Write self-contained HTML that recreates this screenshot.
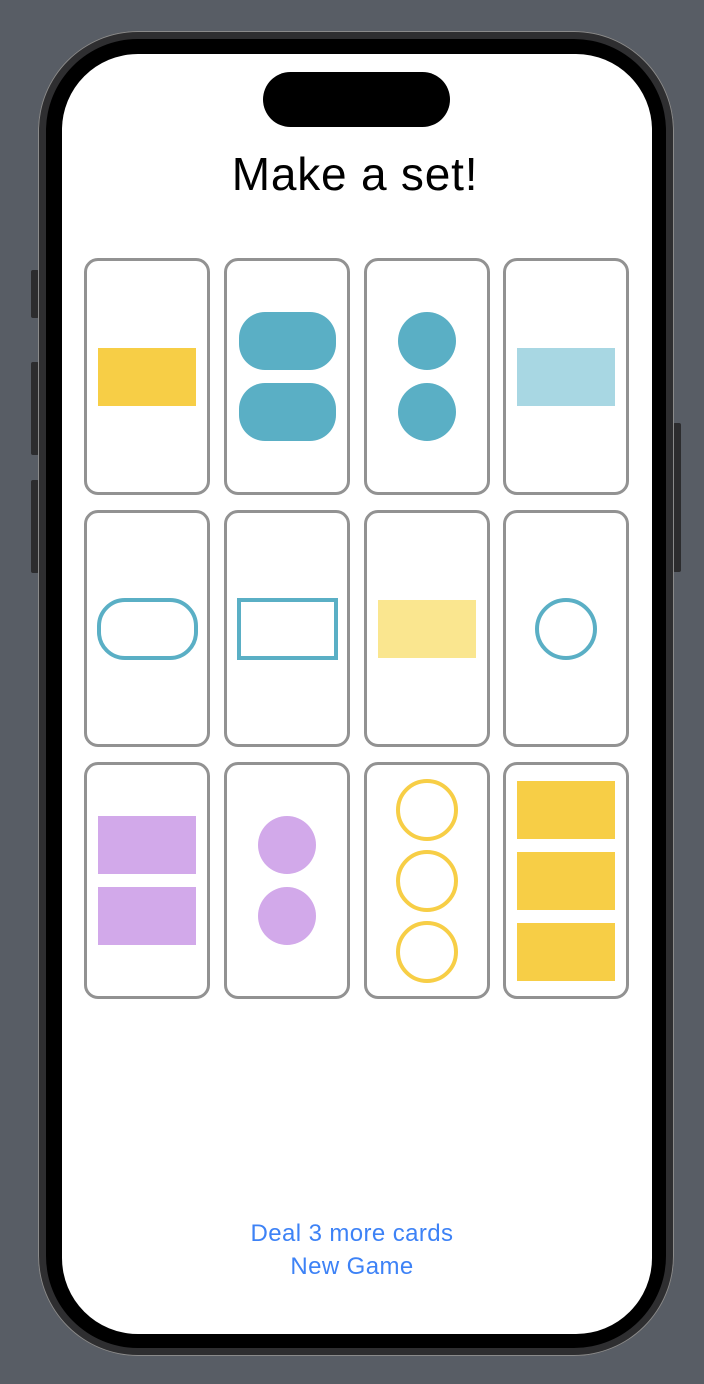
<!DOCTYPE html><html><head><style>
body{margin:0;width:704px;height:1384px;background:#585d65;position:relative;overflow:hidden;font-family:"Liberation Sans",sans-serif}
.a{position:absolute}
.card{position:absolute;width:120px;height:231px;border:3px solid #929292;border-radius:14px;box-sizing:content-box;display:flex;flex-direction:column;align-items:center;justify-content:center;gap:13px;background:#fff}
.r{width:98px;height:58px}
.o{width:97px;height:58px;border-radius:26px;box-sizing:border-box}
.c{width:58px;height:58px;border-radius:50%;box-sizing:border-box}
.btn{position:absolute;left:0;width:704px;text-align:center;color:#3d82f6;font-size:24px;letter-spacing:0.4px}
</style></head><body>
<div class="a" style="left:31px;top:270px;width:8px;height:48px;background:#2c2c2e;border-radius:2px"></div>
<div class="a" style="left:31px;top:362px;width:8px;height:93px;background:#2c2c2e;border-radius:2px"></div>
<div class="a" style="left:31px;top:480px;width:8px;height:93px;background:#2c2c2e;border-radius:2px"></div>
<div class="a" style="left:673px;top:423px;width:8px;height:149px;background:#2c2c2e;border-radius:2px"></div>
<div class="a" style="left:38px;top:31px;width:636px;height:1325px;border-radius:100px;background:#2e2e30;box-shadow:0 0 0 1px #8a8a8a inset"></div>
<div class="a" style="left:46px;top:39px;width:620px;height:1309px;border-radius:92px;background:#000"></div>
<div class="a" style="left:62px;top:54px;width:590px;height:1280px;border-radius:76px;background:#fff"></div>
<div class="a" style="left:263px;top:72px;width:187px;height:55px;border-radius:28px;background:#000"></div>
<div class="a" style="left:0;top:147px;width:710px;text-align:center;font-size:46px;color:#000;letter-spacing:0.8px">Make a set!</div>

<div class="card" style="left:84px;top:258px"><div class="r" style="background:#f7ce46"></div></div>
<div class="card" style="left:224px;top:258px"><div class="o" style="background:#5aafc5"></div><div class="o" style="background:#5aafc5"></div></div>
<div class="card" style="left:364px;top:258px"><div class="c" style="background:#5aafc5"></div><div class="c" style="background:#5aafc5"></div></div>
<div class="card" style="left:503px;top:258px"><div class="r" style="background:#a8d7e3"></div></div>

<div class="card" style="left:84px;top:510px"><div class="o" style="border:4px solid #5aafc5;width:101px;height:62px;border-radius:28px"></div></div>
<div class="card" style="left:224px;top:510px"><div class="r" style="border:4px solid #5aafc5;box-sizing:border-box;width:101px;height:62px"></div></div>
<div class="card" style="left:364px;top:510px"><div class="r" style="background:#fae68f"></div></div>
<div class="card" style="left:503px;top:510px"><div class="c" style="border:4px solid #5aafc5;width:62px;height:62px"></div></div>

<div class="card" style="left:84px;top:762px"><div class="r" style="background:#d2a9ea"></div><div class="r" style="background:#d2a9ea"></div></div>
<div class="card" style="left:224px;top:762px"><div class="c" style="background:#d2a9ea"></div><div class="c" style="background:#d2a9ea"></div></div>
<div class="card" style="left:364px;top:762px;gap:9px"><div class="c" style="border:4px solid #f7ce46;width:62px;height:62px"></div><div class="c" style="border:4px solid #f7ce46;width:62px;height:62px"></div><div class="c" style="border:4px solid #f7ce46;width:62px;height:62px"></div></div>
<div class="card" style="left:503px;top:762px"><div class="r" style="background:#f7ce46"></div><div class="r" style="background:#f7ce46"></div><div class="r" style="background:#f7ce46"></div></div>

<div class="btn" style="top:1220px">Deal 3 more cards</div>
<div class="btn" style="top:1253px">New Game</div>
</body></html>
